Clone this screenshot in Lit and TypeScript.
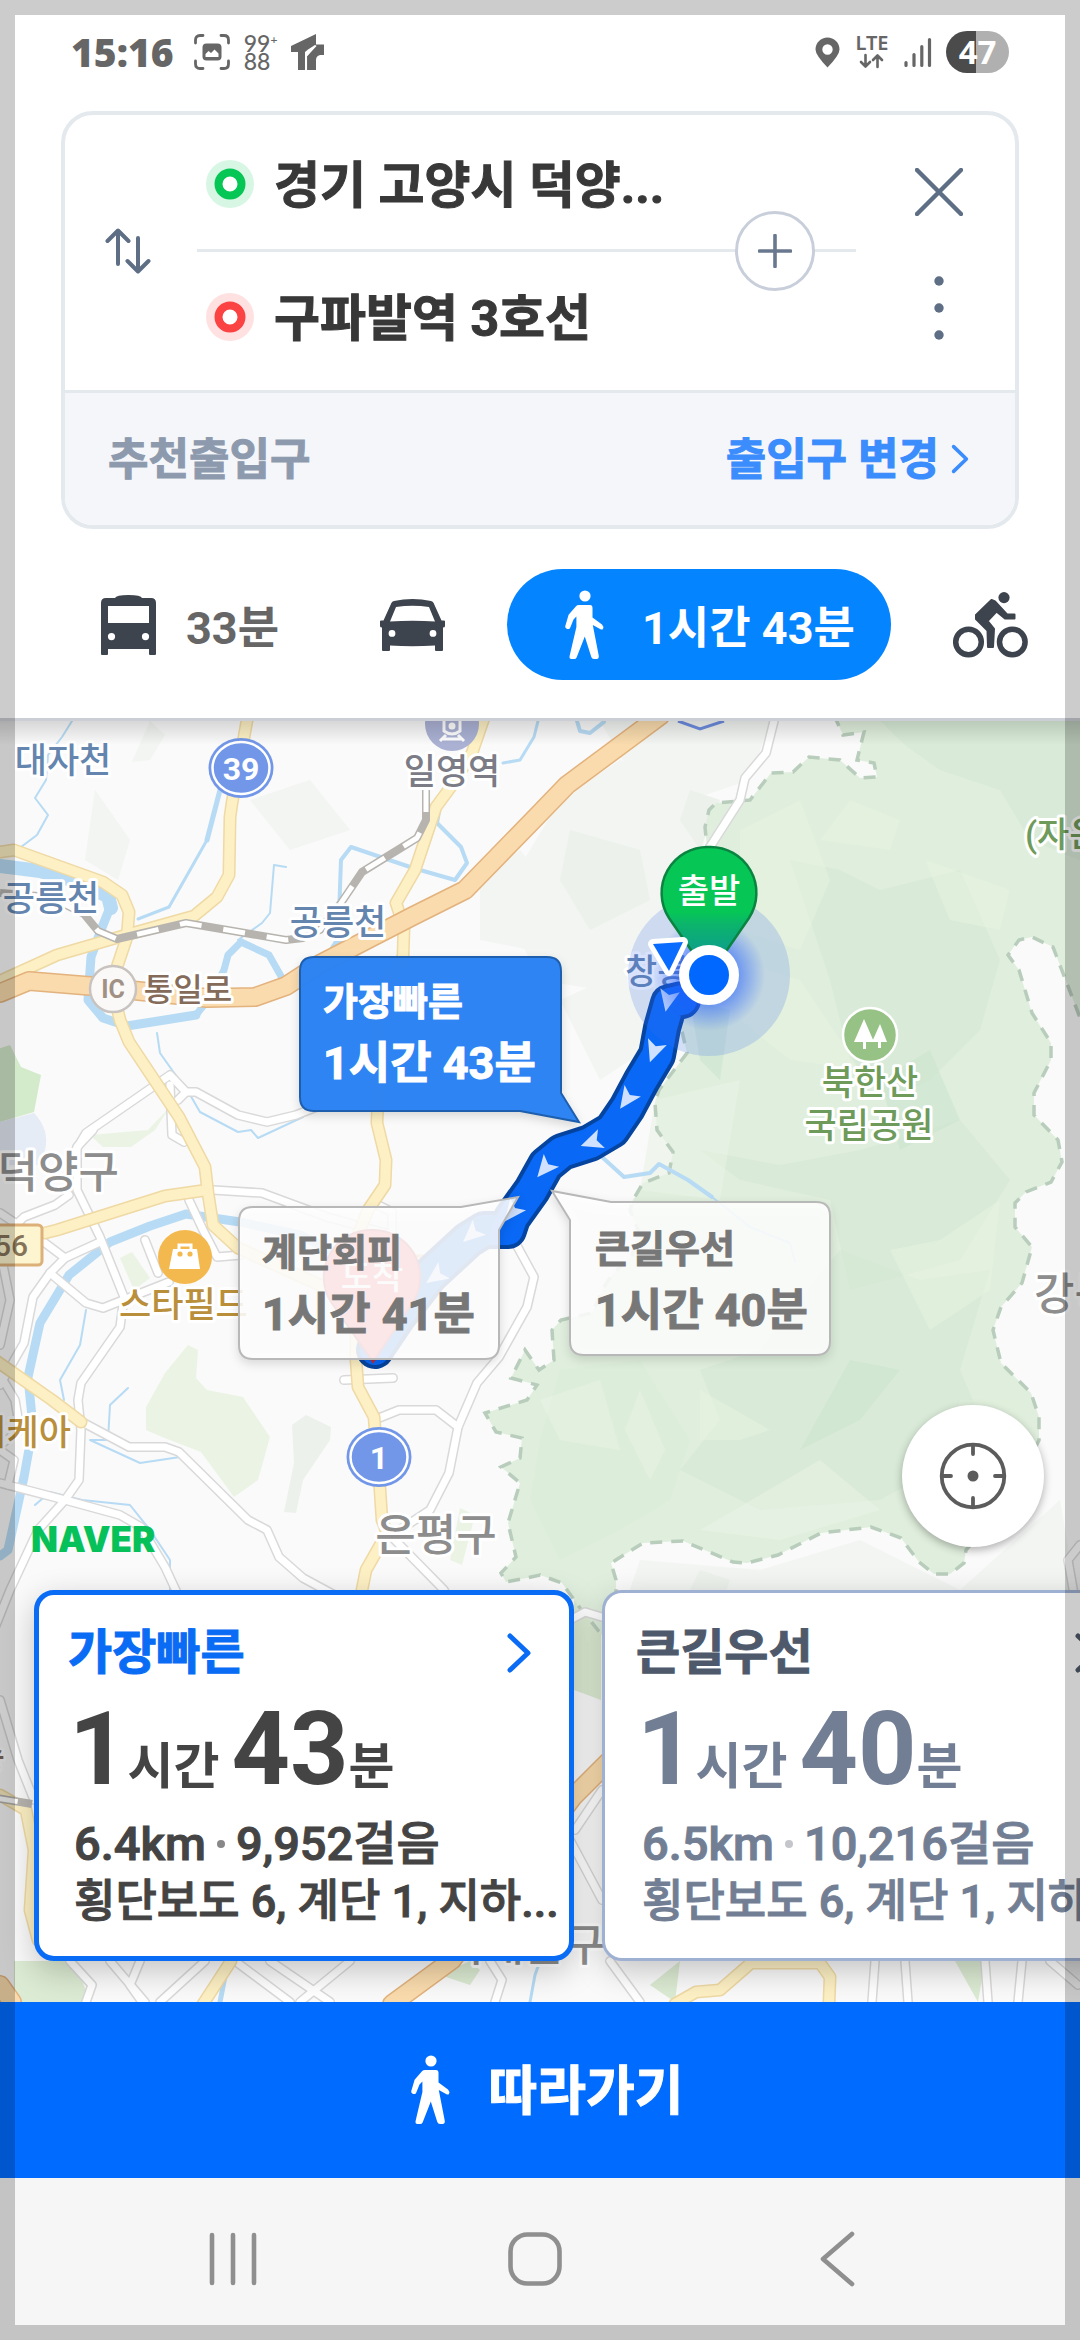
import { LitElement, html, css, svg } from "lit";
import { customElement, property, state } from "lit/decorators.js";
import { classMap } from "lit/directives/class-map.js";

/* ---------- shared icons ---------- */

const walker = html`<svg class="walker" viewBox="0 0 40 70" aria-hidden="true">
  <circle cx="21" cy="6" r="5.6" fill="currentColor"></circle>
  <path fill="currentColor" d="M15 15H26Q28.500 15 28.500 18V27.500L38 34.500Q40 36.500 39 39Q38 40 36.500 39.200L28.800 35L34.800 66Q35 69 32.500 69H30Q28 69 27.300 67L20.800 46.500L12.600 67.500Q12 69 10 69H7.500Q5 69 5.600 66L12.400 37V26.500L9.500 29.500L6.300 37.500Q5.600 39.600 3.400 38.900Q.8 38.300 1.300 36L4.600 24.800L12 16.200Q13 15 15 15Z"></path>
</svg>`;

const busIcon = html`<svg width="55" height="62" viewBox="0 0 55 62" aria-hidden="true">
  <path fill="#3d444d" fill-rule="evenodd" d="M5 4H14Q15 1 27.500 1Q40 1 41 4H50Q55 4 55 9V60Q55 61 54 61H49Q48 61 48 60V55H7V60Q7 61 6 61H1Q0 61 0 60V9Q0 4 5 4ZM7 12V29H48V12ZM10.500 39A3.600 3.600 0 1 0 10.500 46.200A3.600 3.600 0 1 0 10.500 39ZM44.500 39A3.600 3.600 0 1 0 44.500 46.200A3.600 3.600 0 1 0 44.500 39Z"></path>
</svg>`;

const carIcon = html`<svg width="65" height="62" viewBox="0 0 65 62" aria-hidden="true">
  <path fill="#3d444d" fill-rule="evenodd" d="M14 7Q32.500 3 51 7Q53 7.500 53.600 9L61.500 26.500H64Q65 26.500 65 27.500V32Q65 33.500 63 33.500V56Q63 57 62 57H56Q55 57 55 56V51.500Q32 53 10 51.500V56Q10 57 9 57H3Q2 57 2 56V33.500Q0 33.500 0 32V27.500Q0 26.500 1 26.500H3.500L11.400 9Q12 7.500 14 7ZM16 13L10 27.500Q32.500 26 55 27.500L49 13Q32.500 10.500 16 13ZM12 36A3.400 3.400 0 1 0 12 42.800A3.400 3.400 0 1 0 12 36ZM53 36A3.400 3.400 0 1 0 53 42.800A3.400 3.400 0 1 0 53 36Z"></path>
</svg>`;

const bikeIcon = html`<svg width="75" height="66" viewBox="0 0 75 66" aria-hidden="true">
  <g fill="none" stroke="#3d444d" stroke-width="5.500"><circle cx="15.500" cy="50" r="12.800"></circle><circle cx="59.300" cy="50" r="12.800"></circle></g>
  <circle cx="51" cy="5.600" r="5.600" fill="#3d444d"></circle>
  <path fill="#3d444d" stroke="#3d444d" stroke-width="2" stroke-linejoin="round" d="M38.500 8L42 9.500L54 22.500H61.500V26.500H52L43.500 19.500L34.500 29L41 37L40 55H35L34.500 38.500L23 27V23Z"></path>
</svg>`;

const chevron = (w: number, h: number, stroke: number) => html`<svg width=${w} height=${h} viewBox="0 0 ${w} ${h}" aria-hidden="true">
  <polyline points="${stroke},${stroke} ${w - stroke},${h / 2} ${stroke},${h - stroke}" fill="none" stroke="currentColor" stroke-width=${stroke} stroke-linecap="round" stroke-linejoin="round"></polyline>
</svg>`;

/* ---------- map ---------- */

const LAKES: [number, string][] = [
  [14, "0,866 40,871 72,880 108,896 111,908"],
  [9, "111,905 103,925 91,957 88,1000 103,1018 127,1026 196,1015"],
  [7, "196,1015 208,1000 224,970 228,955 241,942"],
  [7, "241,942 269,955 286,985 320,980 326,960 345,930"],
  [2, "72,721 62,737 48,755 46,780 35,798 48,815 37,835 21,847"],
  [5, "220,790 207,840"],
  [3, "207,840 190,870 169,907 138,919"],
  [2, "286,867 274,865 270,913 262,923 238,940"],
  [4, "339,915 341,860 351,847 413,868 455,880 467,863 461,847 437,823 442,795 470,760 485,721"],
  [3, "503,763 520,760 534,737 538,721"],
  [4, "577,721 580,731 590,733 604,722"],
  [2, "157,1033 160,1053 172,1070 189,1093 200,1112 238,1132 251,1130 258,1138 303,1117"],
  [9, "340,1255 300,1235 240,1222 186,1214 150,1226 110,1242 69,1275 40,1323 28,1377 33,1427 24,1477 8,1550 0,1556"],
  [2, "86,1310 80,1345 60,1380 64,1400"],
  [2, "128,1388 110,1405 108,1440 90,1440 140,1463 180,1457"],
  [2, "35,1505 50,1492 82,1500 130,1505 150,1530 170,1560 170,1590"],
  [4, "602,1157 624,1177 650,1173 659,1164 688,1180 712,1197"],
  [2, "712,1197 750,1227 790,1243 795,1262"],
  [3, "530,2002 535,1975 540,1961"],
  [5, "220,2002 228,1961"],
];

const WHITE_ROADS = [
  "93,1130 77,1147 77,1190 100,1237 124,1297 120,1327 81,1383 78,1400 81,1430 79,1480 65,1500 38,1530 10,1590 -10,1640",
  "69,1195 55,1205 24,1217 -5,1245",
  "0,1213 45,1243 65,1258 100,1242",
  "65,1258 50,1273 33,1297 24,1343 0,1385",
  "0,1250 10,1300 0,1345",
  "50,1273 86,1303 103,1308 169,1282",
  "145,1240 158,1273",
  "213,1190 262,1193 327,1217 392,1235 392,1212 378,1205",
  "189,1200 203,1230 217,1257 241,1255",
  "84,1423 129,1447 165,1447 179,1452 248,1520 267,1530 279,1557 303,1578 340,1598 440,1640",
  "0,1483 65,1500 120,1515 141,1527 165,1567 185,1610",
  "0,1375 15,1400 20,1430 0,1445",
  "0,1450 14,1460 8,1485",
  "510,1233 534,1277 527,1307 499,1357 477,1383 458,1427 449,1473 430,1510 389,1537",
  "458,1427 436,1410 399,1410 379,1418",
  "344,1380 393,1378",
  "393,1538 444,1590 470,1640",
  "74,1153 86,1133 170,1075 186,1092 196,1092 238,1115 267,1122 296,1115 340,1098 380,1088",
  "170,1085 172,1135 184,1142",
  "186,1092 178,1100",
  "774,721 766,753 745,778 740,800 710,847",
  "570,1620 585,1612 605,1618",
  "575,1830 602,1790",
  "570,1840 602,1900",
  "1080,1545 1068,1560 1075,1600",
  "70,1961 92,1985 86,2002", "110,1961 145,2002", "140,1961 130,1985 142,2002",
  "205,1961 160,2002", "235,1961 290,2002", "270,1961 330,2002", "350,1961 300,2002",
  "490,1961 502,1980 495,2002", "875,1961 872,2002", "905,1961 908,2002", "985,1961 988,2002",
  "1022,1961 1018,2002", "1050,1961 1078,1985", "610,1961 640,2002", "0,1700 18,1760 34,1800",
];

const YELLOW_ROADS = [
  "248,715 232,803 230,817 229,875 217,897 194,916 133,933 57,955 0,981",
  "0,852 14,850 103,882 122,895 129,912 127,937 117,967 112,987 120,1020 129,1042 179,1117 205,1167 208,1193 213,1225 238,1248 324,1287 374,1310",
  "485,715 472,753 450,788 436,807 415,870 396,903 404,927 403,957 372,1003 380,1043 377,1123 386,1160 385,1185 368,1210 356,1240 356,1360 358,1387 374,1417 380,1490 382,1520 387,1533 366,1570 360,1600",
  "45,1233 57,1230 165,1196 207,1190",
  "-5,1360 52,1400 81,1422",
  "0,1795 26,1810 34,1850 30,1910 38,1940",
  "231,1961 203,2004",
  "675,2004 696,1992 720,1990 751,1963 820,1963 830,1977 829,2004",
];

const ORANGE_ROADS = [
  "0,993 29,981 90,986 207,998 255,997 286,986 320,964 413,916 465,890 540,813 567,785 660,716",
  "610,1760 573,1797 452,1960 392,2004",
  "0,1985 12,2002",
];

const RAILS = [
  "426,790 426,820 417,838 362,872 341,903 320,930 303,938 286,940 186,923 117,939 98,931 84,914 50,897 0,893",
  "-4,1798 32,1804",
];

const PARK = "834,715 843,735 864,732 857,760 874,763 877,777 860,778 840,760 809,757 793,772 771,773 750,800 716,803 709,810 705,827 707,847 700,900 690,960 681,1027 687,1053 659,1090 655,1103 657,1130 673,1152 669,1173 643,1183 633,1200 630,1210 638,1230 632,1255 612,1275 604,1287 592,1313 561,1320 552,1330 554,1360 539,1370 525,1350 511,1378 537,1385 527,1400 485,1413 496,1432 522,1438 520,1458 501,1467 520,1483 508,1523 516,1557 501,1573 506,1582 527,1578 540,1575 562,1583 580,1608 606,1640 616,1605 616,1580 611,1563 643,1543 683,1541 733,1562 747,1563 778,1555 821,1533 871,1527 901,1538 919,1562 934,1574 950,1574 964,1563 966,1550 1010,1500 1039,1440 1039,1417 1031,1393 1001,1363 993,1330 1001,1307 1022,1283 1032,1247 1015,1227 1015,1203 1026,1192 1051,1182 1062,1162 1058,1140 1034,1115 1034,1093 1051,1060 1051,1043 1032,1013 1019,970 1008,955 1019,940 1032,937 1053,947 1079,1015 1100,1020 1100,715";

const FACETS: [string, string][] = [
  ["#d3e8d3", "880,721 1080,721 1080,860 1030,840 1000,790 940,770 905,745"],
  ["#d3e8d3", "790,860 840,870 880,890 960,870 1000,960 980,1030 930,1080 890,1100 850,1060 830,980"],
  ["#d3e8d3", "700,1150 780,1165 860,1150 960,1120 1010,1180 960,1260 850,1290 830,1200 740,1180"],
  ["#d3e8d3", "700,1370 760,1350 840,1250 920,1280 990,1270 960,1370 990,1440 880,1500 760,1510 680,1470 720,1420"],
  ["#d9ecd7", "560,1370 640,1360 690,1440 670,1500 620,1530 560,1560 530,1500 540,1440"],
  ["#e6f3df", "740,830 800,800 830,880 800,950 740,930"],
  ["#e6f3df", "890,1250 940,1240 1000,1200 990,1290 930,1330"],
  ["#e6f3df", "700,1390 770,1430 740,1440 700,1440"],
  ["#e6f3df", "735,960 800,980 860,1070 790,1060 740,1020"],
  ["#e6f3df", "850,800 900,820 890,850 820,840"],
  ["#e6f3df", "925,860 1010,890 1000,930 950,920"],
  ["#cbe3cd", "880,1080 930,1050 960,1120 900,1150"],
  ["#cbe3cd", "800,1450 850,1360 900,1370 860,1420"],
  ["#cbe3cd", "690,1000 730,1010 720,1080 700,1060"],
  ["#e9f3e6", "540,1400 600,1380 620,1450 560,1440"],
  ["#dfefdb", "960,1400 1020,1400 1030,1460 940,1490"],
  ["#e9f3e6", "655,1100 740,1080 720,1200 640,1190"],
  ["#e9f3e6", "820,1460 880,1510 780,1540 700,1530"],
  ["#e9f3e6", "640,1390 665,1450 650,1480 625,1430"],
];

const ROUTE = "682,1000 669,1003 662,1028 657,1055 642,1080 627,1108 612,1130 590,1143 562,1152 546,1165 532,1190 512,1218 508,1230 484,1230 468,1240 430,1275 398,1316 375,1350";
const ARROWS: [number, number, number][] = [
  [668, 1000, 12], [654, 1051, 20], [627, 1099, 35], [592, 1142, 70],
  [545, 1168, 40], [512, 1212, 38], [472, 1234, 48], [436, 1276, 55],
];

type Label = { t: string; x: number; y: number; s: number; c: string; a?: string };
const LABELS: Label[] = [
  { t: "대자천", x: 63, y: 773, s: 35, c: "#6485ae" },
  { t: "공릉천", x: 51, y: 911, s: 35, c: "#6485ae" },
  { t: "공릉천", x: 338, y: 935, s: 35, c: "#6485ae" },
  { t: "창릉천", x: 625, y: 984, s: 35, c: "#6485ae", a: "start" },
  { t: "통일로", x: 188, y: 1001, s: 32, c: "#846b5a" },
  { t: "일영역", x: 452, y: 784, s: 35, c: "#7b7c86" },
  { t: "(자운봉)", x: 1025, y: 847, s: 35, c: "#6e9a5a", a: "start" },
  { t: "북한산", x: 870, y: 1095, s: 35, c: "#6e9a5a" },
  { t: "국립공원", x: 869, y: 1138, s: 35, c: "#6e9a5a" },
  { t: "덕양구", x: 119, y: 1188, s: 44, c: "#8d8d8d", a: "end" },
  { t: "강북구", x: 1034, y: 1310, s: 44, c: "#8d8d8d", a: "start" },
  { t: "은평구", x: 436, y: 1551, s: 44, c: "#8d8d8d" },
  { t: "서대문구", x: 605, y: 1961, s: 44, c: "#8d8d8d", a: "end" },
  { t: "스타필드", x: 119, y: 1317, s: 35, c: "#b98f3c", a: "start" },
  { t: "이케아", x: 71, y: 1445, s: 35, c: "#b98f3c", a: "end" },
  { t: "삼송", x: 5, y: 1770, s: 35, c: "#846b5a", a: "end" },
];

type Bubble = { shape: string; x: number; y: number; title: string; time: string; active?: boolean };
const BUBBLES: Bubble[] = [
  { shape: "M253 1207H461L518 1197L499 1230V1345Q499 1359 485 1359H253Q239 1359 239 1345V1221Q239 1207 253 1207Z", x: 262, y: 1266, title: "계단회피", time: "1시간 41분" },
  { shape: "M611 1202H816Q830 1202 830 1216V1341Q830 1355 816 1355H584Q570 1355 570 1341V1220L552 1191Z", x: 595, y: 1262, title: "큰길우선", time: "1시간 40분" },
  { shape: "M314 957H547Q561 957 561 971V1093L579 1122L520 1111H314Q300 1111 300 1097V971Q300 957 314 957Z", x: 323, y: 1015, title: "가장빠른", time: "1시간 43분", active: true },
];

@customElement("route-map")
class RouteMap extends LitElement {
  static styles = css`
    :host { display: block; overflow: hidden; background: #f8f9f8; }
    .canvas { display: block; width: 100%; height: 100%; font-family: Roboto, "Noto Sans CJK KR", sans-serif; }
    .line { fill: none; stroke-linejoin: round; stroke-linecap: round; }
    .rail { fill: none; stroke-linejoin: round; }
    .label { font-weight: 500; paint-order: stroke; stroke: #fff; stroke-width: 6px; stroke-linejoin: round; }
    .shield { font-weight: 700; fill: #fff; font-size: 32px; }
    .pin { font-size: 34px; font-weight: 500; fill: #fff; }
    .shadow { filter: drop-shadow(0 4px 5px rgba(0, 0, 0, 0.14)); }
    .bubble-text { font-weight: 700; fill: #777; stroke: #777; stroke-width: 1px; }
    .bubble-on { fill: #fff; stroke: #fff; }
    .bubble-title { font-size: 38px; }
    .bubble-time { font-size: 45px; }
  `;

  private roads(list: string[], edge: string, fill: string, w: number) {
    return svg`
      ${list.map((p) => svg`<polyline class="line" points=${p} stroke=${edge} stroke-width=${w + 3}></polyline>`)}
      ${list.map((p) => svg`<polyline class="line" points=${p} stroke=${fill} stroke-width=${w}></polyline>`)}`;
  }

  private shield(x: number, y: number, t: string) {
    return svg`<ellipse cx=${x} cy=${y} rx="32.500" ry="30" fill="#7397e8"></ellipse>
      <ellipse cx=${x} cy=${y} rx="28.500" ry="26" fill="none" stroke="#fff" stroke-width="2.500"></ellipse>
      <text class="shield" x=${x} y=${y + 12} text-anchor="middle">${t}</text>`;
  }

  private bubble(b: Bubble) {
    const text = (size: string) => `bubble-text ${size} ${b.active ? "bubble-on" : ""}`;
    return svg`<g>
      <path class="shadow" d=${b.shape} fill=${b.active ? "#2b82f3" : "#fff"} fill-opacity=${b.active ? 0.98 : 0.88} stroke=${b.active ? "#1d5fae" : "#b8b8b8"} stroke-width="2"></path>
      <text class=${text("bubble-title")} x=${b.x} y=${b.y}>${b.title}</text>
      <text class=${text("bubble-time")} x=${b.x} y=${b.y + 64}>${b.time}</text>
    </g>`;
  }

  render() {
    return html`<svg class="canvas" viewBox="0 721 1080 1281" preserveAspectRatio="xMidYMin slice" role="img" aria-label="도보 경로 지도">
      <defs>
        <linearGradient id="shade" x1="0" y1="0" x2="0" y2="1"><stop offset="0" stop-color="#000" stop-opacity=".14"></stop><stop offset="1" stop-color="#000" stop-opacity="0"></stop></linearGradient>
        <radialGradient id="glow"><stop offset=".3" stop-color="#1f5cff" stop-opacity=".75"></stop><stop offset="1" stop-color="#1f5cff" stop-opacity="0"></stop></radialGradient>
        <linearGradient id="start" x1="0" y1="0" x2="0" y2="1"><stop offset=".5" stop-color="#06c755"></stop><stop offset=".6" stop-color="#0bb46b"></stop><stop offset="1" stop-color="#0f8ca8"></stop></linearGradient>
      </defs>
      <rect x="0" y="715" width="1080" height="1300" fill="#f9faf9"></rect>
      <g fill="#f2f5f1">
        <polygon points="150,721 165,735 150,760 132,762"></polygon>
        <polygon points="95,790 130,840 118,880 85,860"></polygon>
        <polygon points="250,800 310,780 350,830 290,850"></polygon>
        <polygon points="560,800 620,760 700,800 705,860 680,950 600,990 540,980 500,900"></polygon>
        <polygon points="600,721 770,721 750,780 690,800 640,790"></polygon>
        <polygon points="480,880 520,850 560,900 530,950 480,940"></polygon>
        <polygon points="560,1000 650,960 660,1040 600,1080"></polygon>
        <polygon points="640,1560 760,1570 860,1540 960,1590 1060,1500 1080,1620 620,1620"></polygon>
      </g>
      <g fill="#ecf1ec">
        <polygon points="690,790 720,800 700,850 680,820"></polygon>
        <polygon points="570,830 640,850 650,900 590,930 560,880"></polygon>
        <polygon points="306,1415 331,1427 330,1440 303,1480 296,1513 284,1512 294,1463 292,1425"></polygon>
        <polygon points="700,1570 730,1580 720,1610 680,1610"></polygon>
      </g>
      <polygon points="-5,1050 10,1045 21,1067 41,1075 34,1112 0,1122" fill="#d3eacb"></polygon>
      <path d="M0 1122L34 1113Q50 1130 45 1150L40 1165H0Z" fill="#e6ecf6"></path>
      <g fill="#ebf4e4">
        <polygon points="169,1108 148,1130 90,1135 103,1147 131,1147 155,1130"></polygon>
        <polygon points="188,1345 198,1350 196,1378 207,1390 243,1397 270,1437 258,1480 234,1497 201,1452 162,1437 146,1430 146,1407 165,1373"></polygon>
        <polygon points="120,1258 132,1252 150,1278 134,1290"></polygon>
        <polygon points="84,1300 110,1306 130,1292 120,1305 100,1312"></polygon>
        <polygon points="460,1508 475,1515 462,1565 450,1560"></polygon>
      </g>
      <g fill="#dcebd3">
        <polygon points="14,1961 75,1961 90,2002 14,2002"></polygon>
        <polygon points="440,1975 470,1961 480,1970 470,1985"></polygon>
        <polygon points="955,1961 985,1961 978,2002"></polygon>
        <polygon points="650,1985 680,1961 675,2002"></polygon>
        <polygon points="574,1600 601,1590 601,1700 574,1690"></polygon>
      </g>
      <polygon points=${PARK} fill="#e0efdd"></polygon>
      ${FACETS.map(([c, p]) => svg`<polygon points=${p} fill=${c} opacity=".55"></polygon>`)}
      <polygon points=${PARK} fill="none" stroke="#b9cdbc" stroke-width="3.500" stroke-dasharray="12 9"></polygon>

      ${LAKES.map(([w, p]) => svg`<polyline class="line" points=${p} stroke="#b7dbf4" stroke-width=${w}></polyline>`)}
      ${this.roads(WHITE_ROADS, "#d9d9d9", "#ffffff", 7)}
      ${this.roads(YELLOW_ROADS, "#efd9a4", "#fdf0c4", 10)}
      ${this.roads(ORANGE_ROADS, "#e3b27d", "#f9dbad", 17)}
      ${RAILS.map((p) => svg`
        <polyline class="rail" points=${p} stroke="#b7b4af" stroke-width="8"></polyline>
        <polyline class="rail" points=${p} stroke="#fff" stroke-width="5" stroke-dasharray="22 22"></polyline>`)}

      <path d="M678 721L700 729L724 721" fill="none" stroke="#6e8de0" stroke-width="3"></path>
      <circle cx="452" cy="724" r="27" fill="#aab1d3"></circle>
      <g fill="none" stroke="#fff" stroke-width="3"><path d="M444 721V731Q452 737 460 731V721"></path><path d="M446 735L440 741M458 735L464 741M443 739H461"></path></g>
      <circle cx="452" cy="726" r="3.500" fill="#fff"></circle>
      ${this.shield(241, 768, "39")}
      ${this.shield(379, 1457, "1")}
      <circle cx="113" cy="989" r="23" fill="#faf9f8" stroke="#c9c3c0" stroke-width="2.500"></circle>
      <text x="113" y="998" text-anchor="middle" font-size="25" font-weight="700" fill="#a19084">IC</text>
      <rect x="-20" y="1225" width="62" height="40" rx="4" fill="#fdf5cf" stroke="#dcb078" stroke-width="3"></rect>
      <text x="28" y="1256" text-anchor="end" font-size="30" font-weight="500" fill="#857358">56</text>
      <rect x="400" y="1256" width="27" height="40" rx="4" fill="#fdf5cf" stroke="#dcb078" stroke-width="3"></rect>
      <circle cx="870" cy="1035" r="27" fill="#97c285" stroke="#fff" stroke-width="2.500"></circle>
      <g fill="#fff"><path d="M864 1019L854 1042H863V1049H866V1042H874Z"></path><path d="M880 1024L872 1042H878V1048H881V1042H887Z"></path></g>
      <circle cx="185" cy="1257" r="27" fill="#f3b94e"></circle>
      <path d="M173 1249H197L200 1269H169Z" fill="#fff"></path>
      <path d="M179 1250V1245H191V1250" fill="none" stroke="#fff" stroke-width="3"></path>
      <circle cx="180" cy="1254" r="2.600" fill="#f3b94e"></circle><circle cx="190" cy="1254" r="2.600" fill="#f3b94e"></circle>
      ${LABELS.map((l) => svg`<text class="label" x=${l.x} y=${l.y} font-size=${l.s} fill=${l.c} text-anchor=${l.a ?? "middle"}>${l.t}</text>`)}

      <polyline class="line" points=${ROUTE} stroke="#05449f" stroke-width="38"></polyline>
      <polyline class="line" points=${ROUTE} stroke="#0968f5" stroke-width="30"></polyline>
      ${ARROWS.map(([x, y, r]) => svg`<path transform="translate(${x} ${y}) rotate(${r})" d="M-10 -10L0 -5L10 -10L0 12Z" fill="#cfe1ff"></path>`)}

      <path d="M372 1230A47 47 0 0 1 413 1302L373 1362L331 1302A47 47 0 0 1 372 1230Z" fill="#f9424f" stroke="#c22a35" stroke-width="2"></path>
      <text class="pin" x="372" y="1289" text-anchor="middle">도착</text>

      <circle cx="709" cy="975" r="81" fill="#3c6cf0" opacity=".2"></circle>
      <circle cx="709" cy="975" r="56" fill="url(#glow)"></circle>
      <path d="M709 847A46 46 0 0 1 749 918L709 976L669 918A46 46 0 0 1 709 847Z" fill="url(#start)" stroke="#0b8441" stroke-width="2.500"></path>
      <text class="pin" x="709" y="903" text-anchor="middle">출발</text>
      <path d="M653 944L683 942L669 971Z" fill="#0a6cff" stroke="#fff" stroke-width="10" stroke-linejoin="round"></path>
      <path d="M653 944L683 942L669 971Z" fill="#0a6cff"></path>
      <circle cx="709" cy="975" r="25" fill="#0068ff" stroke="#fff" stroke-width="10"></circle>

      ${BUBBLES.map((b) => this.bubble(b))}
      <rect x="0" y="721" width="1080" height="24" fill="url(#shade)"></rect>
    </svg>`;
  }
}

/* ---------- status bar ---------- */

@customElement("status-bar")
class StatusBar extends LitElement {
  static styles = css`
    :host { display: flex; justify-content: space-between; align-items: center; height: 104px; padding: 0 71px; box-sizing: border-box; color: #666; }
    .group { display: flex; align-items: center; gap: 14px; }
    .clock { font: 800 39px/48px "Open Sans", sans-serif; margin-right: 6px; }
    .tiny { display: flex; align-items: flex-start; font: 500 12px/12px Lato, sans-serif; }
    .pair { display: grid; font-size: 23px; line-height: 18px; }
    .lte { font-family: "Noto Sans", sans-serif; font-weight: 600; }
    .battery { width: 63px; height: 42px; border-radius: 21px; background: linear-gradient(90deg, #4b4b4b 48%, #b0b0b0 48%); color: #fff; font: 700 33px/42px "Open Sans", sans-serif; text-align: center; }
  `;
  render() {
    return html`
      <div class="group">
        <span class="clock">15:16</span>
        <svg width="36" height="36" viewBox="0 0 36 36" aria-hidden="true">
          <path d="M9 1.500H6Q1.500 1.500 1.500 6V9M27 1.500H30Q34.500 1.500 34.500 6V9M9 34.500H6Q1.500 34.500 1.500 30V27M27 34.500H30Q34.500 34.500 34.500 30V27" fill="none" stroke="#666" stroke-width="2.800" stroke-linecap="round"></path>
          <rect x="8.500" y="9.500" width="19" height="17" rx="4" fill="#666"></rect>
          <path d="M11.500 23V20L14.500 17L17 19L20.500 15.500L24.500 19.500V23Z" fill="#fff"></path>
        </svg>
        <span class="tiny"><span class="pair"><span>99</span><span>88</span></span>+</span>
        <svg width="34" height="36" viewBox="0 0 34 36" aria-hidden="true">
          <path d="M0 12L25 0V10.500L33 10.500V21H29Q25 22 25 26V36H16V22L24 12.500V11L17 15.500L14 18V36H7V18H0Z" fill="#666"></path>
          <path d="M15.300 36V22L25 11.500" fill="none" stroke="#fff" stroke-width="1.500"></path>
        </svg>
      </div>
      <div class="group">
        <svg width="25" height="31" viewBox="0 0 25 31" aria-hidden="true"><path fill="#666" fill-rule="evenodd" d="M12.500 .5A12 12 0 0 1 24.500 12.500Q24.500 18 12.500 30.500Q.5 18 .5 12.500A12 12 0 0 1 12.500 .5ZM12.500 7.300A5.200 5.200 0 1 0 12.500 17.700A5.200 5.200 0 1 0 12.500 7.300Z"></path></svg>
        <svg width="36" height="38" viewBox="0 0 36 38" aria-hidden="true">
          <text class="lte" x="18" y="17" text-anchor="middle" font-size="20" fill="#666">LTE</text>
          <path d="M11.500 22V33M7 29L11.500 33.500L16 29M23.500 34V22.500M19 27L23.500 22.500L28 27" fill="none" stroke="#666" stroke-width="2.600" stroke-linecap="round" stroke-linejoin="round"></path>
        </svg>
        <svg width="28" height="31" viewBox="0 0 28 31" aria-hidden="true"><path d="M2 25.500V28.500M10 17.500V28.500M17.800 9.500V28.500M25.500 2.500V28.500" fill="none" stroke="#666" stroke-width="3.200" stroke-linecap="round"></path></svg>
        <span class="battery">47</span>
      </div>`;
  }
}

/* ---------- result card ---------- */

type Route = { name: string; hours: number; minutes: number; distance: string; steps: string; detail: string };

@customElement("route-card")
class RouteCard extends LitElement {
  @property({ attribute: false }) route!: Route;
  @property({ type: Boolean }) active = false;
  static styles = css`
    :host { display: block; }
    .card { display: block; width: 100%; box-sizing: border-box; text-align: left; font: inherit; background: #fff; border: 3px solid #9fb1d2; border-radius: 20px; padding: 30px 12px 27px 31px; color: #727e93; box-shadow: 0 10px 32px rgba(0, 0, 0, 0.22); }
    .on { border: 5px solid #0a6bf4; padding: 28px 10px 25px 29px; color: #444; }
    .head { display: flex; justify-content: space-between; align-items: center; font-size: 48px; line-height: 60px; font-weight: 700; color: #4e5a6b; padding-right: 26px; -webkit-text-stroke: 1px; }
    .on .head { color: #0a6bf4; }
    .time { display: block; margin: 16px 0; padding-left: 1px; font-size: 102px; line-height: 100px; font-weight: 700; white-space: nowrap; }
    .unit { font-size: 50px; line-height: 50px; font-weight: 700; }
    .gap { margin-right: 12px; }
    .meta { display: flex; align-items: center; gap: 11px; padding-left: 6px; font-size: 47px; line-height: 58px; font-weight: 500; white-space: nowrap; -webkit-text-stroke: 1px; }
    .dot { width: 8px; height: 8px; border-radius: 50%; background: #c4c6cb; }
    .on .dot { background: #888; }
    .detail { font-size: 45px; }
  `;
  render() {
    const r = this.route;
    return html`<button class=${classMap({ card: true, on: this.active })} aria-pressed=${this.active}>
      <span class="head">${r.name}${chevron(28, 44, 5)}</span>
      <span class="time">${r.hours}<span class="unit gap">시간</span>${r.minutes}<span class="unit">분</span></span>
      <span class="meta"><span>${r.distance}</span><span class="dot"></span><span>${r.steps}</span></span>
      <span class="meta detail">${r.detail}</span>
    </button>`;
  }
}

/* ---------- screen ---------- */

@customElement("app-root")
class AppRoot extends LitElement {
  @state() private selected = 0;
  private routes: Route[] = [
    { name: "가장빠른", hours: 1, minutes: 43, distance: "6.4km", steps: "9,952걸음", detail: "횡단보도 6, 계단 1, 지하..." },
    { name: "큰길우선", hours: 1, minutes: 40, distance: "6.5km", steps: "10,216걸음", detail: "횡단보도 6, 계단 1, 지하..." },
  ];

  static styles = css`
    :host { display: flex; flex-direction: column; position: relative; min-height: 100vh; overflow: hidden; background: #fff; font-family: Roboto, "Noto Sans CJK KR", sans-serif; }
    button { border: 0; background: none; padding: 0; margin: 0; font: inherit; color: inherit; cursor: pointer; }
    svg { display: block; flex: none; }
    .frame { position: absolute; inset: 0; border: 15px solid rgba(0, 0, 0, 0.2); pointer-events: none; z-index: 5; }
    .header { border-bottom: 3px solid #cbced4; }
    .text { padding-bottom: 6px; -webkit-text-stroke: 1px; }

    .search { margin: 7px 61px 0; border: 4px solid #e4e9ee; border-radius: 32px; overflow: hidden; }
    .stops { display: grid; grid-template-columns: 132px 1fr 159px; padding: 4px 0 8px; }
    .swap { display: grid; place-items: center; padding-right: 6px; }
    .fields { position: relative; }
    .field { display: flex; align-items: center; gap: 20px; width: 100%; height: 130px; padding-left: 9px; font-size: 50px; font-weight: 700; color: #383838; white-space: nowrap; }
    .rule { height: 3px; background: #e4e9ee; }
    .add { position: absolute; right: 41px; top: 50%; margin-top: -40px; width: 80px; height: 80px; box-sizing: border-box; border: 3px solid #c8cfda; border-radius: 50%; background: #fff; display: grid; place-items: center; }
    .side { display: flex; flex-direction: column; align-items: center; justify-content: center; gap: 60px; padding: 6px 0 0 6px; }
    .gate { display: flex; justify-content: space-between; align-items: center; height: 135px; box-sizing: border-box; border-top: 3px solid #e4e9ee; background: #f4f6fa; padding: 0 45px 0 43px; font-size: 44px; font-weight: 700; color: #8d9aae; }
    .change { display: flex; align-items: center; gap: 11px; color: #3b8cfc; }

    .modes { display: flex; align-items: center; gap: 23px; padding: 40px 0 38px 62px; font-size: 45px; font-weight: 700; color: #666; }
    .mode { display: flex; align-items: center; gap: 30px; height: 111px; padding: 0 39px; white-space: nowrap; }
    .chosen { gap: 38px; padding: 0 36px 0 57px; border-radius: 56px; background: #0584ff; color: #fff; }
    .walker { width: 40px; height: 70px; }

    .map { position: relative; flex: 1 0 auto; display: flex; flex-direction: column; justify-content: flex-end; min-height: 900px; }
    .tiles { position: absolute; inset: 0; }
    .over { position: relative; display: flex; justify-content: space-between; align-items: flex-end; padding: 0 36px 0 31px; }
    .brand { font: 900 35px/33px Inter, sans-serif; color: #06c15a; }
    .locate { width: 142px; height: 142px; margin-bottom: 9px; border-radius: 50%; background: #fff; box-shadow: 0 3px 8px rgba(0, 0, 0, 0.3); display: grid; place-items: center; }
    .cards { position: relative; display: flex; gap: 28px; margin: 0; padding: 34px 34px 41px; list-style: none; overflow-x: auto; scrollbar-width: none; }
    .slot { flex: 0 0 50vw; min-width: 0; }

    .follow { display: flex; justify-content: center; align-items: center; gap: 38px; height: 176px; padding-left: 14px; background: #006cff; color: #fff; font-size: 53px; font-weight: 700; box-sizing: border-box; }
    .nav { display: grid; grid-template-columns: repeat(3, 1fr); height: 162px; padding: 0 92px 0 82px; box-sizing: border-box; background: #f6f6f6; place-items: center; }
  `;

  private stopIcon(color: string) {
    return html`<svg width="48" height="48" viewBox="0 0 48 48" aria-hidden="true"><circle cx="24" cy="24" r="24" fill=${color} opacity=".16"></circle><circle cx="24" cy="24" r="11.500" fill="#fff" stroke=${color} stroke-width="8"></circle></svg>`;
  }

  render() {
    return html`
      <header class="header">
        <status-bar></status-bar>
        <section class="search">
          <div class="stops">
            <button class="swap" aria-label="출발지와 도착지 바꾸기">
              <svg width="46" height="46" viewBox="0 0 46 46" aria-hidden="true"><path d="M13 36V3M2.500 13L13 2.500L23.500 13M33 10V43M22.500 33L33 43.500L43.500 33" fill="none" stroke="#5d6e85" stroke-width="4" stroke-linecap="round" stroke-linejoin="round"></path></svg>
            </button>
            <div class="fields">
              <button class="field">${this.stopIcon("#06c755")}<span class="text">경기 고양시 덕양...</span></button>
              <div class="rule"></div>
              <button class="field">${this.stopIcon("#fc4343")}<span class="text">구파발역 3호선</span></button>
              <button class="add" aria-label="경유지 추가"><svg width="34" height="34" viewBox="0 0 34 34" aria-hidden="true"><path d="M17 1.500V32.500M1.500 17H32.500" stroke="#69788f" stroke-width="3.600" stroke-linecap="round"></path></svg></button>
            </div>
            <div class="side">
              <button aria-label="닫기"><svg width="48" height="48" viewBox="0 0 48 48" aria-hidden="true"><path d="M2 2L46 46M46 2L2 46" stroke="#5d6e85" stroke-width="4.500" stroke-linecap="round"></path></svg></button>
              <button aria-label="더보기"><svg width="40" height="64" viewBox="0 0 40 64" aria-hidden="true"><g fill="#5d6e85"><circle cx="20" cy="5" r="4.700"></circle><circle cx="20" cy="32" r="4.700"></circle><circle cx="20" cy="59" r="4.700"></circle></g></svg></button>
            </div>
          </div>
          <div class="gate"><span class="text">추천출입구</span><button class="change"><span class="text">출입구 변경</span>${chevron(20, 32, 3.6)}</button></div>
        </section>
        <nav class="modes">
          <button class="mode">${busIcon}33분</button>
          <button class="mode" aria-label="자동차">${carIcon}</button>
          <button class="mode chosen" aria-current="true">${walker}1시간 43분</button>
          <button class="mode" aria-label="자전거">${bikeIcon}</button>
        </nav>
      </header>

      <main class="map">
        <route-map class="tiles"></route-map>
        <div class="over">
          <span class="brand">NAVER</span>
          <button class="locate" aria-label="현재 위치">
            <svg width="68" height="68" viewBox="0 0 68 68" aria-hidden="true"><circle cx="34" cy="34" r="31.300" fill="none" stroke="#5c5c5c" stroke-width="3.800"></circle><circle cx="34" cy="34" r="5.500" fill="#5c5c5c"></circle><path d="M34 3V12M34 56V65M3 34H12M56 34H65" stroke="#5c5c5c" stroke-width="3.800" stroke-linecap="round"></path></svg>
          </button>
        </div>
        <ul class="cards">
          ${this.routes.map((r, i) => html`<li class="slot"><route-card .route=${r} ?active=${i === this.selected} @click=${() => (this.selected = i)}></route-card></li>`)}
        </ul>
      </main>

      <button class="follow">${walker}<span class="text">따라가기</span></button>
      <nav class="nav">
        <button aria-label="최근 앱"><svg width="50" height="54" viewBox="0 0 50 54" aria-hidden="true"><path d="M4 3V51M25 3V51M46 3V51" stroke="#8f8f8f" stroke-width="4.600" stroke-linecap="round"></path></svg></button>
        <button aria-label="홈"><svg width="54" height="54" viewBox="0 0 54 54" aria-hidden="true"><rect x="2.500" y="2.500" width="49" height="49" rx="17" fill="none" stroke="#8f8f8f" stroke-width="4.600"></rect></svg></button>
        <button aria-label="뒤로"><svg width="36" height="56" viewBox="0 0 36 56" aria-hidden="true"><path d="M33 3L4 28L33 53" fill="none" stroke="#8f8f8f" stroke-width="4.600" stroke-linecap="round" stroke-linejoin="round"></path></svg></button>
      </nav>
      <div class="frame"></div>`;
  }
}
